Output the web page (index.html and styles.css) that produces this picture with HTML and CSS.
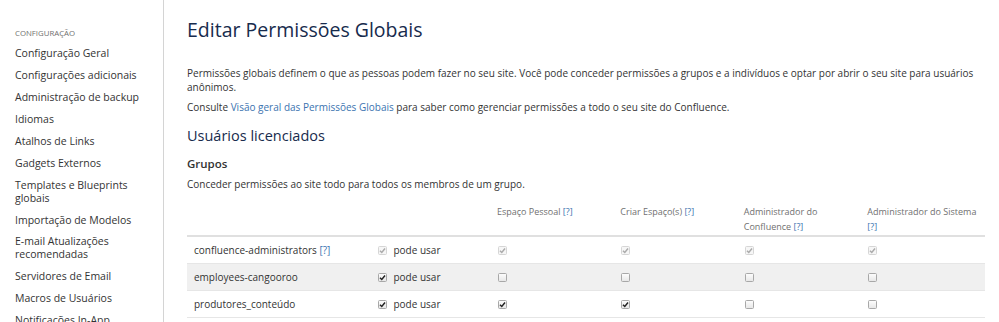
FILE: index.html
```html
<!DOCTYPE html>
<html lang="pt">
<head>
<meta charset="utf-8">
<link rel="stylesheet" href="styles.css">
</head>
<body>
<div class="page">
  <nav class="sidebar">
    <div class="side-heading">CONFIGURAÇÃO</div>
    <ul class="side-list">
      <li>Configuração Geral</li>
      <li>Configurações adicionais</li>
      <li>Administração de backup</li>
      <li>Idiomas</li>
      <li>Atalhos de Links</li>
      <li>Gadgets Externos</li>
      <li>Templates e Blueprints globais</li>
      <li>Importação de Modelos</li>
      <li>E-mail Atualizações recomendadas</li>
      <li>Servidores de Email</li>
      <li>Macros de Usuários</li>
      <li>Notificações In-App</li>
    </ul>
  </nav>
  <main class="main">
    <h1 class="title">Editar Permissões Globais</h1>
    <p class="para">Permissões globais definem o que as pessoas podem fazer no seu site. Você pode conceder permissões a grupos e a indivíduos e optar por abrir o seu site para usuários anônimos.</p>
    <p class="para">Consulte <a class="link">Visão geral das Permissões Globais</a> para saber como gerenciar permissões a todo o seu site do Confluence.</p>
    <h2 class="h2">Usuários licenciados</h2>
    <h3 class="h3">Grupos</h3>
    <p class="para desc">Conceder permissões ao site todo para todos os membros de um grupo.</p>
    <table class="perm">
      <colgroup>
        <col class="c-name"><col class="c-use"><col class="c-p"><col class="c-p"><col class="c-p"><col class="c-p">
      </colgroup>
      <thead>
        <tr>
          <th></th><th></th>
          <th>Espaço Pessoal <a class="link">[?]</a></th>
          <th>Criar Espaço(s) <a class="link">[?]</a></th>
          <th>Administrador do Confluence <a class="link">[?]</a></th>
          <th>Administrador do Sistema <a class="link">[?]</a></th>
        </tr>
      </thead>
      <tbody>
        <tr>
          <td>confluence-administrators <a class="link">[?]</a></td>
          <td><span class="cb dis"><svg viewBox="0 0 10 10"><path d="M2.2 5.2 L4.2 7.2 L7.8 2.8"/></svg></span>pode usar</td>
          <td><span class="cb dis"><svg viewBox="0 0 10 10"><path d="M2.2 5.2 L4.2 7.2 L7.8 2.8"/></svg></span></td>
          <td><span class="cb dis"><svg viewBox="0 0 10 10"><path d="M2.2 5.2 L4.2 7.2 L7.8 2.8"/></svg></span></td>
          <td><span class="cb dis"><svg viewBox="0 0 10 10"><path d="M2.2 5.2 L4.2 7.2 L7.8 2.8"/></svg></span></td>
          <td><span class="cb dis"><svg viewBox="0 0 10 10"><path d="M2.2 5.2 L4.2 7.2 L7.8 2.8"/></svg></span></td>
        </tr>
        <tr class="alt">
          <td>employees-cangooroo</td>
          <td><span class="cb"><svg viewBox="0 0 10 10"><path d="M2.2 5.2 L4.2 7.2 L7.8 2.8"/></svg></span>pode usar</td>
          <td><span class="cb"></span></td>
          <td><span class="cb"></span></td>
          <td><span class="cb"></span></td>
          <td><span class="cb"></span></td>
        </tr>
        <tr>
          <td>produtores_conteúdo</td>
          <td><span class="cb"><svg viewBox="0 0 10 10"><path d="M2.2 5.2 L4.2 7.2 L7.8 2.8"/></svg></span>pode usar</td>
          <td><span class="cb"><svg viewBox="0 0 10 10"><path d="M2.2 5.2 L4.2 7.2 L7.8 2.8"/></svg></span></td>
          <td><span class="cb"><svg viewBox="0 0 10 10"><path d="M2.2 5.2 L4.2 7.2 L7.8 2.8"/></svg></span></td>
          <td><span class="cb"></span></td>
          <td><span class="cb"></span></td>
        </tr>
      </tbody>
    </table>
  </main>
</div>
</body>
</html>
```
FILE: styles.css
```css
* { box-sizing: border-box; }
html, body { margin: 0; padding: 0; background: #fff; }
body {
  font-family: "Open Sans", "Noto Sans", sans-serif;
  font-size: 10px;
  color: #333;
  overflow: hidden;
}
.page {
  display: flex;
  height: 322px;
}
.sidebar {
  width: 164px;
  flex: none;
  border-right: 1px solid #d4d4d4;
  padding: 28px 10px 0 15px;
}
.side-heading {
  font-size: 7.8px;
  color: #707070;
  margin-bottom: 4px;
}
.side-list {
  list-style: none;
  margin: 0;
  padding: 0;
}
.side-list li {
  font-size: 10.5px;
  line-height: 13px;
  color: #333;
  padding: 4.5px 0;
}
.side-list li:nth-child(n+9) { padding: 4.4px 0; }
.main {
  flex: 1;
  padding: 15px 14px 0 23px;
}
.title {
  font-size: 19.5px;
  font-weight: 500;
  color: #172b4d;
  margin: 0 0 21px;
  line-height: 30px;
}
.para {
  margin: 0 0 6px;
  line-height: 14px;
  font-size: 10px;
  color: #333;
}
.link { color: #3b73af; text-decoration: none; }
.h2 {
  font-size: 14.5px;
  font-weight: 400;
  color: #172b4d;
  margin: 12px 0 0;
  line-height: 20px;
}
.h3 {
  font-size: 11.5px;
  font-weight: 600;
  color: #333;
  margin: 8px 0 0;
  line-height: 20px;
}
.desc { margin-top: 3px; }
.perm {
  width: 798px;
  border-collapse: collapse;
  margin-top: 7px;
}
.c-name { width: 185px; }
.c-use { width: 120px; }
.c-p { width: 124px; }
.perm th {
  text-align: left;
  font-weight: 400;
  font-size: 9px;
  color: #707070;
  line-height: 15px;
  padding: 6px 6px 1px;
  vertical-align: top;
  border-bottom: 2px solid #e0e0e0;
}
.perm td {
  height: 27px;
  padding: 0 7px;
  font-size: 10px;
  border-bottom: 1px solid #e6e6e6;
  vertical-align: middle;
}
.perm tr.alt td { background: #f0f0f0; }
.cb {
  display: inline-block;
  width: 9px;
  height: 9px;
  border: 1px solid #a8a8a8;
  border-radius: 1.5px;
  background: linear-gradient(#fcfcfc, #e8e8e8);
  vertical-align: -1px;
  margin-right: 6px;
  position: relative;
}
.cb svg {
  position: absolute;
  left: -1px; top: -1px;
  width: 9px; height: 9px;
  fill: none;
  stroke: #222;
  stroke-width: 1.6;
}
.cb.dis {
  border-color: #d6d6d6;
  background: #f6f6f6;
}
.cb.dis svg { stroke: #aaa; }
```
